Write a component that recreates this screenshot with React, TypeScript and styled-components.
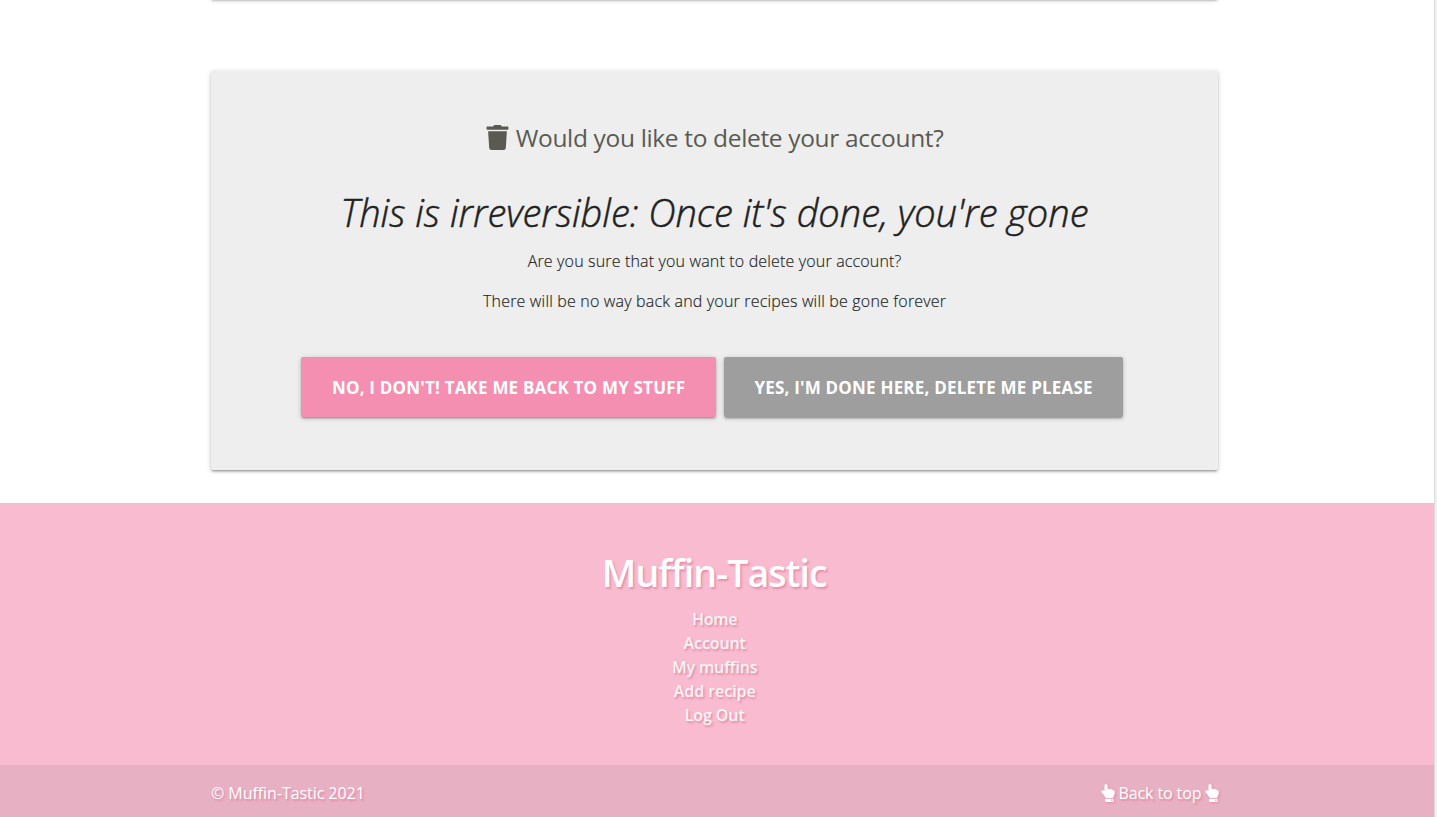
import React from "react";
import styled, { createGlobalStyle } from "styled-components";
import { FaTrash, FaHandPointUp } from "react-icons/fa";

const GlobalStyle = createGlobalStyle`
  * { box-sizing: border-box; }
  body {
    margin: 0;
    background: #fff;
    font-family: "Open Sans", "Noto Sans", sans-serif;
    overflow: hidden;
  }
`;

const raised = `box-shadow: 0 2px 2px 0 rgba(0,0,0,.14), 0 3px 1px -2px rgba(0,0,0,.12), 0 1px 5px 0 rgba(0,0,0,.2);`;

const Window = styled.div`
  display: flex;
  width: 1437px;
  height: 817px;
`;

const Page = styled.div`
  display: flex;
  flex-direction: column;
  width: 1434px;
`;

const ScrollTrack = styled.div`
  width: 3px;
  background: #f0f0f0;
  border-left: 1px solid #dcdcdc;
`;

const Main = styled.main`
  height: 503px;
  padding-left: 211px;
  overflow: hidden;
`;

const PreviousCard = styled.div`
  width: 1007px;
  height: 20px;
  margin-top: -21px;
  border-radius: 2px;
  background: #eee;
  ${raised}
`;

const Card = styled.section`
  display: flex;
  flex-direction: column;
  align-items: center;
  width: 1007px;
  height: 399px;
  margin-top: 72px;
  padding-top: 47px;
  border-radius: 2px;
  background: #eee;
  ${raised}
`;

const Text = styled.span<{ $track: number }>`
  letter-spacing: ${(p) => p.$track}px;
  margin-right: ${(p) => -p.$track}px;
  white-space: nowrap;
`;

const Question = styled.h2`
  display: flex;
  align-items: center;
  gap: 5.5px;
  height: 38px;
  margin: 0;
  color: #5a5a52;
  font-size: 24.5px;
  font-weight: 400;
`;

const Warning = styled.h1`
  height: 56px;
  margin: 28px 0 0;
  color: #212121;
  font-size: 38px;
  font-weight: 300;
  font-style: italic;
  line-height: 56px;
  -webkit-text-stroke: 0.5px #212121;
`;

const Paragraph = styled.p`
  height: 24px;
  margin: 9px 0 7px;
  color: #212121;
  font-size: 16px;
  font-weight: 300;
  line-height: 24px;
  -webkit-text-stroke: 0.15px #212121;
`;

const Actions = styled.div`
  display: flex;
  gap: 8px;
  margin-top: 37px;
  margin-right: 5px;
`;

const Button = styled.button<{ $color: string; $width: number }>`
  display: flex;
  align-items: center;
  justify-content: center;
  width: ${(p) => p.$width}px;
  height: 60px;
  padding: 0;
  border: 0;
  border-radius: 2px;
  background: ${(p) => p.$color};
  color: #fff;
  font-family: inherit;
  font-size: 17px;
  font-weight: 700;
  text-transform: uppercase;
  ${raised}
`;

const Footer = styled.footer`
  display: flex;
  flex-direction: column;
  height: 314px;
  background: #f8bbd0;
  text-shadow: 1.5px 1.5px 2px rgba(216, 90, 120, 0.45);
`;

const FooterBody = styled.div`
  display: flex;
  flex-direction: column;
  align-items: center;
  width: 1007.5px;
  height: 262px;
  margin-left: 211px;
  padding-top: 42px;
`;

const Brand = styled.h3`
  height: 56px;
  margin: 0 0 6px;
  color: #fff;
  font-size: 37.5px;
  font-weight: 600;
  line-height: 56px;
`;

const FooterLink = styled.a`
  color: #f5f5f5;
  font-size: 16px;
  font-weight: 600;
  line-height: 24px;
`;

const Copyright = styled.div`
  display: flex;
  align-items: center;
  justify-content: space-between;
  height: 52px;
  padding: 3px 215px 0 211px;
  background: rgba(51, 51, 51, 0.08);
  color: #fff;
  font-size: 16px;
`;

const TopLink = styled.a`
  display: flex;
  align-items: center;
  gap: 3.5px;
`;

const Hand = styled(FaHandPointUp)`
  width: 14px;
  height: 18px;
  filter: drop-shadow(1.5px 1.5px 1px rgba(216, 90, 120, 0.4));
`;

const links: [string, number][] = [
  ["Home", -0.2],
  ["Account", -0.1],
  ["My muffins", -0.15],
  ["Add recipe", -0.05],
  ["Log Out", -0.1],
];

export default function App() {
  return (
    <Window>
      <GlobalStyle />
      <Page>
        <Main>
          <PreviousCard />
          <Card>
            <Question>
              <FaTrash size={25} />
              <Text $track={-0.34}>Would you like to delete your account?</Text>
            </Question>
            <Warning>
              <Text $track={0}>This is irreversible: Once it's done, you're gone</Text>
            </Warning>
            <Paragraph>
              <Text $track={0.16}>Are you sure that you want to delete your account?</Text>
            </Paragraph>
            <Paragraph>
              <Text $track={0.18}>There will be no way back and your recipes will be gone forever</Text>
            </Paragraph>
            <Actions>
              <Button $color="#f48fb1" $width={415}>
                <Text $track={0.19}>No, I don't! Take me back to my stuff</Text>
              </Button>
              <Button $color="#9e9e9e" $width={399}>
                <Text $track={0.2}>Yes, I'm done here, delete me please</Text>
              </Button>
            </Actions>
          </Card>
        </Main>
        <Footer>
          <FooterBody>
            <Brand>
              <Text $track={-0.93}>Muffin-Tastic</Text>
            </Brand>
            {links.map(([label, track]) => (
              <FooterLink key={label}>
                <Text $track={track}>{label}</Text>
              </FooterLink>
            ))}
          </FooterBody>
          <Copyright>
            <Text $track={-0.06}>© Muffin-Tastic 2021</Text>
            <TopLink>
              <Hand />
              <Text $track={-0.1}>Back to top</Text>
              <Hand />
            </TopLink>
          </Copyright>
        </Footer>
      </Page>
      <ScrollTrack />
    </Window>
  );
}
